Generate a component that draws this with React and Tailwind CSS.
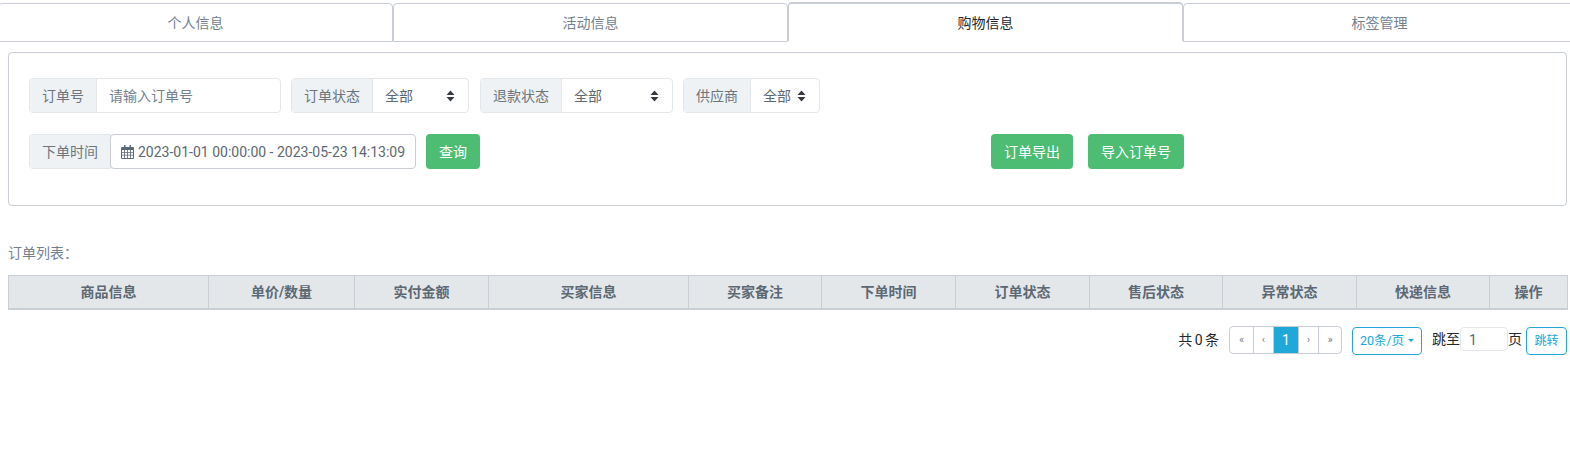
import React from 'react';

const tabs = ['个人信息', '活动信息', '购物信息', '标签管理'];

const columns = [
  { title: '商品信息', width: 'w-[200px]' },
  { title: '单价/数量', width: 'w-[146px]' },
  { title: '实付金额', width: 'w-[134px]' },
  { title: '买家信息', width: 'w-[200px]' },
  { title: '买家备注', width: 'w-[133px]' },
  { title: '下单时间', width: 'w-[134px]' },
  { title: '订单状态', width: 'w-[134px]' },
  { title: '售后状态', width: 'w-[133px]' },
  { title: '异常状态', width: 'w-[134px]' },
  { title: '快递信息', width: 'w-[133px]' },
  { title: '操作', width: 'w-[78px]' },
];

const pages = [
  { label: '«', width: 'w-[23px]' },
  { label: '‹', width: 'w-[20px]' },
  { label: '1', width: 'w-[25px]', active: true },
  { label: '›', width: 'w-[20px]' },
  { label: '»', width: 'w-[23px]' },
];

const Arrows = () => (
  <svg width="9" height="12" viewBox="0 0 9 12" className="shrink-0">
    <path d="M4.5 0.5 L8.5 5 L0.5 5 Z M0.5 7 L8.5 7 L4.5 11.5 Z" fill="#343a40" />
  </svg>
);

const CalendarIcon = () => (
  <svg width="13" height="14" viewBox="0 0 13 14" className="shrink-0">
    <path
      fill="#5c6873"
      fillRule="evenodd"
      d="M3 0h1.5v2h4V0H10v2h2a1 1 0 0 1 1 1v10a1 1 0 0 1-1 1H1a1 1 0 0 1-1-1V3a1 1 0 0 1 1-1h2z
         M1 5v2h2.2V5z M4 5v2h2.1V5z M6.9 5v2H9V5z M9.8 5v2H12V5z
         M1 7.8v2h2.2v-2z M4 7.8v2h2.1v-2z M6.9 7.8v2H9v-2z M9.8 7.8v2H12v-2z
         M1 10.6V13h2.2v-2.4z M4 10.6V13h2.1v-2.4z M6.9 10.6V13H9v-2.4z M9.8 10.6V13H12v-2.4z"
    />
  </svg>
);

const Label = ({ children, width }) => (
  <span className={`${width} h-full flex items-center justify-center bg-[#eff2f5] text-[#6c757d] border-r border-[#e4e7ea] shrink-0`}>
    {children}
  </span>
);

const SelectGroup = ({ label, labelWidth, width, className = '' }) => (
  <div className={`${width} ${className} h-[35px] flex items-center border border-[#e4e7ea] rounded overflow-hidden`}>
    <Label width={labelWidth}>{label}</Label>
    <div className="flex-1 flex items-center justify-between pl-3 pr-[13px] text-[#5c6873]">
      <span>全部</span>
      <Arrows />
    </div>
  </div>
);

const GreenButton = ({ children, width }) => (
  <button className={`${width} h-[35px] rounded bg-[#4dbd74] text-white text-center`}>{children}</button>
);

export default function App() {
  return (
    <div className="w-[1570px] h-[453px] bg-white overflow-hidden text-sm text-[#23282c] font-['Roboto','Noto_Sans_CJK_SC',sans-serif]">
      {/* Tabs */}
      <div className="flex h-[42px] pt-[3px] -ml-[2px] w-[1580px]">
        {tabs.map((tab, i) => (
          <div
            key={tab}
            className={
              i === 2
                ? 'w-[395px] h-[39px] -mt-px flex items-center justify-center text-[#23282c] border-t-2 border-x border-[#c8ced3] rounded-t'
                : `${i === 3 ? 'w-[393px]' : 'w-[395px]'} h-[39px] flex items-center justify-center text-[#73818f] border border-[#c8ced3] rounded-t`
            }
          >
            {tab}
          </div>
        ))}
      </div>

      <div className="pl-2 pr-[3px] -mt-px">
        {/* Filter panel */}
        <div className="mt-[11px] h-[154px] border border-[#c8ced3] rounded px-5 pt-[25px]">
          <div className="flex">
            <div className="w-[252px] h-[35px] flex items-center border border-[#e4e7ea] rounded overflow-hidden">
              <Label width="w-[67px]">订单号</Label>
              <span className="pl-3 text-[#73818f]">请输入订单号</span>
            </div>
            <SelectGroup label="订单状态" labelWidth="w-[81px]" width="w-[178px]" className="ml-[10px]" />
            <SelectGroup label="退款状态" labelWidth="w-[81px]" width="w-[193px]" className="ml-[11px]" />
            <SelectGroup label="供应商" labelWidth="w-[67px]" width="w-[137px]" className="ml-[10px]" />
          </div>

          <div className="flex mt-[21px]">
            <div className="h-[35px] w-[82px] border border-[#e4e7ea] rounded-l overflow-hidden flex">
              <span className="flex-1 flex items-center justify-center bg-[#eff2f5] text-[#6c757d]">下单时间</span>
            </div>
            <div className="-ml-px w-[306px] h-[35px] flex items-center gap-1 pl-[10px] border border-[#c8ced3] rounded text-[#5c6873]">
              <CalendarIcon />
              <span>2023-01-01 00:00:00 - 2023-05-23 14:13:09</span>
            </div>
            <div className="ml-[10px]">
              <GreenButton width="w-[54px]">查询</GreenButton>
            </div>
            <div className="ml-[511px] flex gap-[15px]">
              <GreenButton width="w-[82px]">订单导出</GreenButton>
              <GreenButton width="w-[96px]">导入订单号</GreenButton>
            </div>
          </div>
        </div>

        {/* Order table */}
        <p className="mt-[37px] h-[21px] leading-[21px] text-[#73818f]">订单列表：</p>
        <table className="mt-[11px] w-[1559px] table-fixed border-collapse">
          <thead>
            <tr className="h-[33px] bg-[#e4e7ea]">
              {columns.map((col) => (
                <th key={col.title} className={`${col.width} border border-b-2 border-[#c8ced3] text-center font-bold text-[#5c6873]`}>
                  {col.title}
                </th>
              ))}
            </tr>
          </thead>
        </table>

        {/* Pagination */}
        <div className="mt-[16px] flex items-start justify-end">
          <span className="h-[28px] leading-[28px] [word-spacing:-1px]">共 0 条</span>
          <div className="ml-[10px] h-[28px] flex border border-[#c8ced3] rounded overflow-hidden text-[11px] text-[#73818f]">
            {pages.map((p, i) => (
              <span
                key={p.label}
                className={`${p.width} flex items-center justify-center ${i > 0 ? 'border-l border-[#c8ced3]' : ''} ${p.active ? 'bg-[#20a8d8] text-white text-sm border-[#20a8d8]' : ''}`}
              >
                {p.label}
              </span>
            ))}
          </div>
          <button className="ml-[10px] mt-px w-[70px] h-[28px] flex items-center justify-center gap-1 border border-[#20a8d8] rounded text-[12.5px] text-[#20a8d8]">
            20条/页
            <span className="border-x-[3px] border-t-[3px] border-x-transparent border-t-[#20a8d8]"></span>
          </button>
          <span className="ml-[10px] mt-px w-[28px] h-[24px] leading-[24px]">跳至</span>
          <span className="mt-px w-[48px] h-[24px] pl-2 leading-[24px] border border-[#e4e7ea] rounded text-[#5c6873]">1</span>
          <span className="mt-px w-[18px] h-[24px] leading-[24px]">页</span>
          <button className="mt-px w-[41px] h-[28px] border border-[#20a8d8] rounded text-xs text-[#20a8d8]">跳转</button>
        </div>
      </div>
    </div>
  );
}
